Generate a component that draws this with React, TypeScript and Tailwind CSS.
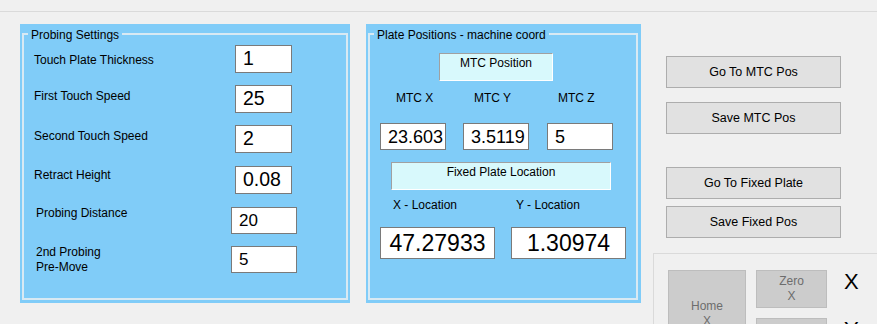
import React from "react";

const BLUE = "bg-[#80ccf8]";

function Input({
  value,
  cls,
  center = false,
}: {
  value: string;
  cls: string;
  center?: boolean;
}) {
  return (
    <div
      className={`${cls} shrink-0 bg-white border border-[#7a7a7a] flex items-center leading-none text-black ${
        center ? "justify-center" : "pl-[7px]"
      }`}
    >
      {value}
    </div>
  );
}

function Row({
  rowMt,
  labelCls,
  inputCls,
  value,
  children,
}: {
  rowMt: string;
  labelCls: string;
  inputCls: string;
  value: string;
  children: React.ReactNode;
}) {
  return (
    <div className={`flex items-start ${rowMt}`}>
      <div className={`${labelCls} shrink-0 text-[12px] text-black`}>{children}</div>
      <Input value={value} cls={inputCls} />
    </div>
  );
}

function GroupBox({
  title,
  outerCls,
  innerPad,
  children,
}: {
  title: string;
  outerCls: string;
  innerPad: string;
  children: React.ReactNode;
}) {
  return (
    <div className={`${outerCls} ${BLUE} flex shrink-0 self-start ${innerPad}`}>
      <div className="relative flex-1 border-2 border-[#d8e9f3] flex flex-col">
        <span
          className={`absolute left-[4px] top-[-7px] ${BLUE} px-[3px] text-[12px] leading-[14px] text-black whitespace-nowrap`}
        >
          {title}
        </span>
        {children}
      </div>
    </div>
  );
}

function Btn({ mt, children }: { mt: string; children: React.ReactNode }) {
  return (
    <div
      className={`${mt} ml-[13px] w-[175px] h-[32px] shrink-0 bg-[#e1e1e1] border border-[#adadad] flex items-center justify-center text-[12.5px] text-black`}
    >
      {children}
    </div>
  );
}

function InfoBox({ cls, children }: { cls: string; children: React.ReactNode }) {
  return (
    <div
      className={`${cls} shrink-0 bg-[#d8f9fc] border-t border-l border-[#a0a0a0] border-r-white border-b-white border-r border-b pt-[2px] text-center text-[12px] leading-[14px] text-black`}
    >
      {children}
    </div>
  );
}

export default function App() {
  return (
    <div className="w-[877px] h-[324px] overflow-hidden bg-[#f0f0f0] font-['Liberation_Sans',Arial,sans-serif] flex flex-col">
      <div className="h-[11px] shrink-0" />
      <div className="h-px bg-[#dadada] shrink-0" />
      <div className="flex flex-1 min-h-0">
        {/* Probing settings */}
        <GroupBox
          title="Probing Settings"
          outerCls="mt-[12px] ml-[20px] w-[330px] h-[279px]"
          innerPad="pt-[9px] pl-[2px] pr-[2px] pb-[3px]"
        >
          <div className="flex flex-col leading-[14px]">
            <Row
              rowMt="mt-[10px]"
              labelCls="ml-[10px] w-[201px] mt-[8px]"
              inputCls="w-[57px] h-[28px] text-[19.5px]"
              value="1"
            >
              Touch Plate Thickness
            </Row>
            <Row
              rowMt="mt-[12px]"
              labelCls="ml-[10px] w-[201px] mt-[4px]"
              inputCls="w-[57px] h-[28px] text-[19.5px]"
              value="25"
            >
              First Touch Speed
            </Row>
            <Row
              rowMt="mt-[12px]"
              labelCls="ml-[10px] w-[201px] mt-[4px]"
              inputCls="w-[57px] h-[28px] text-[19.5px]"
              value="2"
            >
              Second Touch Speed
            </Row>
            <Row
              rowMt="mt-[13px]"
              labelCls="ml-[10px] w-[201px] mt-[2px]"
              inputCls="w-[57px] h-[28px] text-[19.5px]"
              value="0.08"
            >
              Retract Height
            </Row>
            <Row
              rowMt="mt-[13px]"
              labelCls="ml-[12px] w-[195px] mt-[-1px]"
              inputCls="w-[66px] h-[27px] text-[17px]"
              value="20"
            >
              Probing Distance
            </Row>
            <Row
              rowMt="mt-[12px]"
              labelCls="ml-[12px] w-[195px] mt-[-1px] leading-[15px]"
              inputCls="w-[66px] h-[27px] text-[17px]"
              value="5"
            >
              2nd Probing
              <br />
              Pre-Move
            </Row>
          </div>
        </GroupBox>

        {/* Plate positions */}
        <GroupBox
          title="Plate Positions - machine coord"
          outerCls="mt-[12px] ml-[16px] w-[275px] h-[279px]"
          innerPad="pt-[9px] pl-[2px] pr-[3px] pb-[3px]"
        >
          <InfoBox cls="mt-[18px] ml-[69px] w-[114px] h-[28px]">MTC Position</InfoBox>
          <div className="flex mt-[10px] ml-[26px] text-[12px] leading-[14px] text-black">
            <span className="w-[78px] shrink-0">MTC X</span>
            <span className="w-[84px] shrink-0">MTC Y</span>
            <span>MTC Z</span>
          </div>
          <div className="flex mt-[18px] ml-[10px]">
            <Input value="23.603" cls="w-[66px] h-[27px] text-[18px]" />
            <div className="ml-[17px]">
              <Input value="3.5119" cls="w-[66px] h-[27px] text-[18px]" />
            </div>
            <div className="ml-[18px]">
              <Input value="5" cls="w-[66px] h-[27px] text-[18px]" />
            </div>
          </div>
          <InfoBox cls="mt-[12px] ml-[21px] w-[220px] h-[28px]">Fixed Plate Location</InfoBox>
          <div className="flex mt-[8px] ml-[23px] text-[12px] leading-[14px] text-black">
            <span className="w-[123px] shrink-0">X - Location</span>
            <span>Y - Location</span>
          </div>
          <div className="flex mt-[15px] ml-[10px]">
            <Input value="47.27933" cls="w-[115px] h-[32px] text-[23px]" center />
            <div className="ml-[16px]">
              <Input value="1.30974" cls="w-[115px] h-[32px] text-[23px]" center />
            </div>
          </div>
        </GroupBox>

        {/* Right column */}
        <div className="flex-1 pl-[12px] flex flex-col min-w-0">
          <Btn mt="mt-[44px]">Go To MTC Pos</Btn>
          <Btn mt="mt-[14px]">Save MTC Pos</Btn>
          <Btn mt="mt-[33px]">Go To Fixed Plate</Btn>
          <Btn mt="mt-[7px]">Save Fixed Pos</Btn>
          <div className="mt-[15px] flex-1 border-l border-t border-[#dadada] pl-[14px] pt-[16px] flex items-start">
            <div className="w-[78px] h-[87px] shrink-0 bg-[#cccccc] border border-[#bdbdbd] flex flex-col items-center justify-center text-[12px] leading-[15px] text-[#6d6d6d]">
              <span>Home</span>
              <span>X</span>
            </div>
            <div className="ml-[10px] flex flex-col gap-[10px]">
              {["X", "Y"].map((a) => (
                <div key={a} className="flex items-start">
                  <div className="w-[71px] h-[38px] shrink-0 bg-[#cccccc] border border-[#bdbdbd] flex flex-col items-center justify-center text-[12px] leading-[15px] text-[#6d6d6d]">
                    <span>Zero</span>
                    <span>{a}</span>
                  </div>
                  <span className="ml-[17px] mt-[-1px] text-[22px] leading-[26px] text-black">
                    {a}
                  </span>
                </div>
              ))}
            </div>
          </div>
        </div>
      </div>
    </div>
  );
}
